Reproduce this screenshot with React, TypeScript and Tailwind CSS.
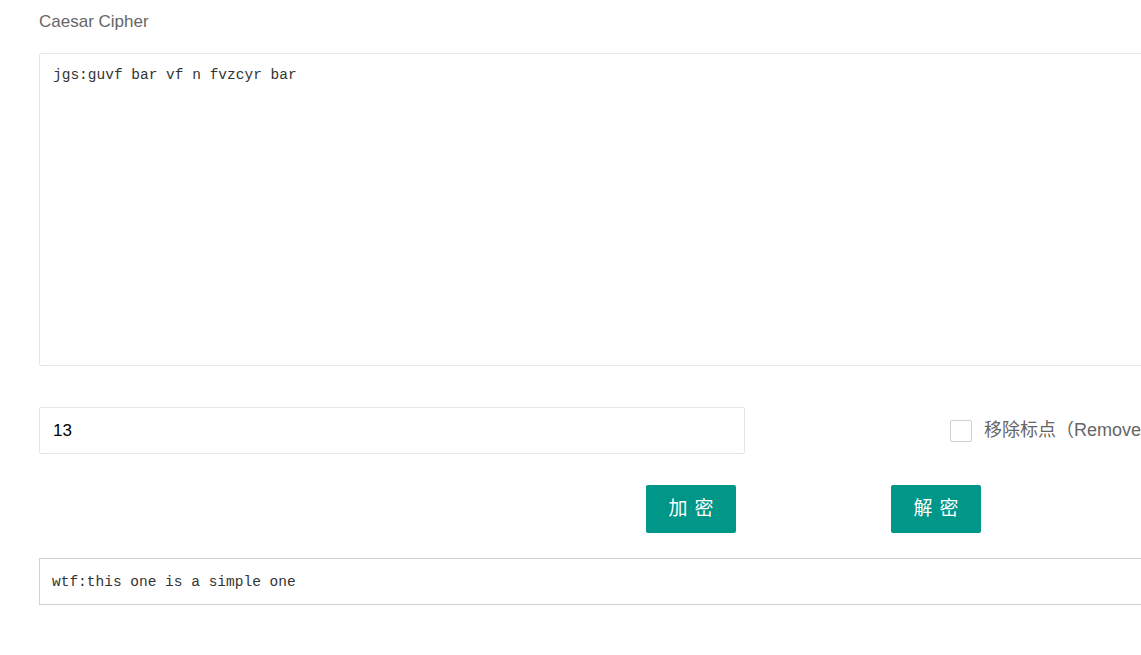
import React, { useState } from 'react';

const mono = { fontFamily: '"Liberation Mono", "DejaVu Sans Mono", monospace' };

export default function App() {
  const [text, setText] = useState('jgs:guvf bar vf n fvzcyr bar');
  const [shift, setShift] = useState('13');
  const [removePunct, setRemovePunct] = useState(false);
  const output = 'wtf:this one is a simple one';

  return (
    <div className="w-[1141px] h-[655px] overflow-hidden bg-white font-['Liberation_Sans','Noto_Sans_CJK_SC',sans-serif]">
      <div className="w-[1500px] pl-[39px]">
        {/* Title */}
        <div className="h-[44px] pt-[10px] text-[17px] leading-[24px] text-[#666]">Caesar Cipher</div>

        {/* Source text */}
        <textarea
          value={text}
          onChange={(e) => setText(e.target.value)}
          className="block w-[1300px] h-[313px] mt-[9px] border border-[#e6e6e6] rounded-[2px] px-[13px] py-[11px] text-[14.5px] leading-[20px] text-[#333] resize-none outline-none"
          style={mono}
        />

        {/* Shift + option */}
        <div className="flex items-center mt-[41px]">
          <input
            value={shift}
            onChange={(e) => setShift(e.target.value)}
            className="w-[706px] h-[47px] border border-[#e6e6e6] rounded-[2px] px-[13px] text-[17px] text-black outline-none"
          />
          <label className="flex items-center ml-[205px] cursor-pointer text-[18px] text-[#666] whitespace-nowrap">
            <span
              onClick={() => setRemovePunct(!removePunct)}
              className={
                'w-[22px] h-[22px] border rounded-[2px] mr-[12px] ' +
                (removePunct ? 'border-[#009688] bg-[#009688]' : 'border-[#d2d2d2] bg-white')
              }
            />
            移除标点（Remove punctuation）
          </label>
        </div>

        {/* Actions */}
        <div className="flex mt-[31px] pl-[607px] gap-[155px]">
          <button className="w-[90px] h-[48px] bg-[#009688] text-white rounded-[2px] text-[19px] tracking-[7px] pl-[7px]">
            加密
          </button>
          <button className="w-[90px] h-[48px] bg-[#009688] text-white rounded-[2px] text-[19px] tracking-[7px] pl-[7px]">
            解密
          </button>
        </div>

        {/* Result */}
        <div
          className="w-[1300px] h-[47px] mt-[25px] border border-[#d2d2d2] px-[12px] pt-[3px] flex items-center text-[14.5px] text-[#333]"
          style={mono}
        >
          {output}
        </div>
      </div>
    </div>
  );
}
